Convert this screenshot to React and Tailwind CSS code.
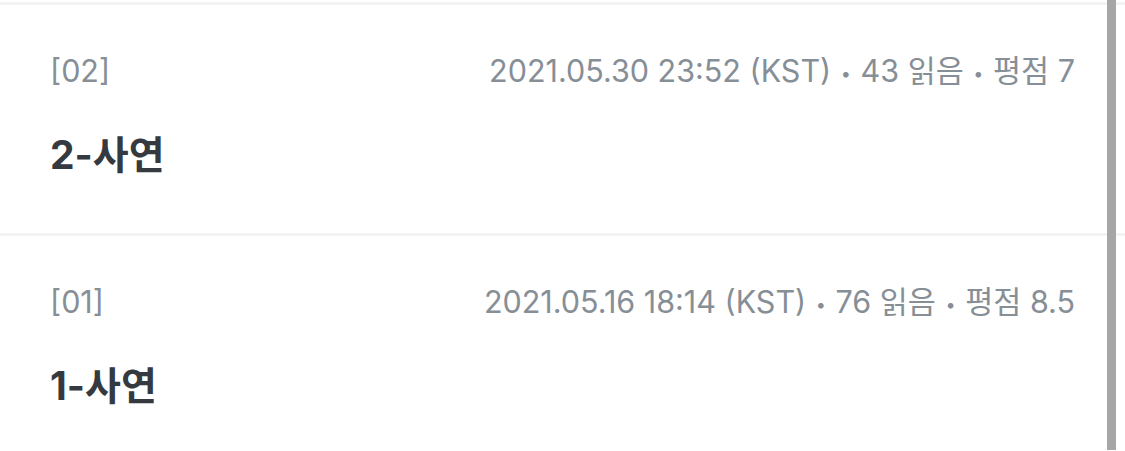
import React from 'react'

const EPISODES = [
  { no: '02', date: '2021.05.30 23:52 (KST)', reads: 43, score: '7', title: '2-사연' },
  { no: '01', date: '2021.05.16 18:14 (KST)', reads: 76, score: '8.5', title: '1-사연' },
]

function Dot() {
  return <span className="mx-[1px] inline-block align-middle text-[18px] leading-none">•</span>
}

function EpisodeRow({ ep }) {
  return (
    <li className="border-t-[3px] border-[#f1f3f5] px-[50px] pt-[46px] pb-[53px]">
      <div className="flex items-center justify-between text-[30.5px] leading-[40px] text-[#868e96]">
        <span>[{ep.no}]</span>
        <span>
          {ep.date} <Dot /> {ep.reads} 읽음 <Dot /> 평점 {ep.score}
        </span>
      </div>
      <h3 className="mt-[39px] text-[39px] leading-[50px] font-bold text-[#343a40]">{ep.title}</h3>
    </li>
  )
}

export default function App() {
  return (
    <div
      className="relative h-[451px] w-[1125px] overflow-hidden bg-white pt-[2px]"
      style={{ fontFamily: 'Inter, "Noto Sans CJK KR", sans-serif' }}
    >
      <ul>
        {EPISODES.map((ep) => (
          <EpisodeRow key={ep.no} ep={ep} />
        ))}
      </ul>
      <div className="absolute right-[9px] top-0 h-[450px] w-[9px] bg-[#a6a6a6]" />
    </div>
  )
}
